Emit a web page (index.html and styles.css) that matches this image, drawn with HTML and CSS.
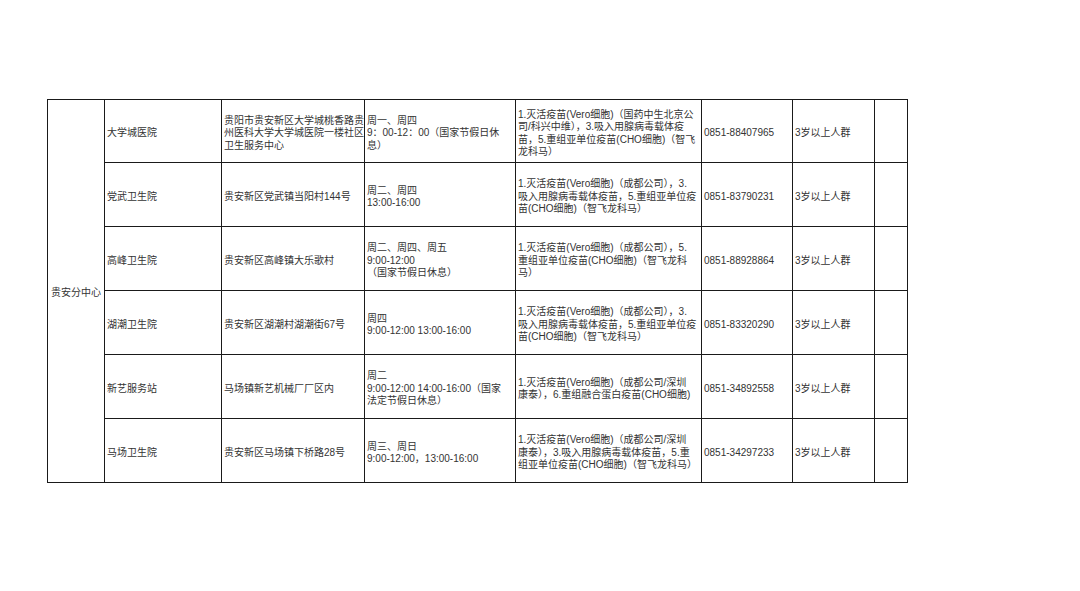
FILE: index.html
```html
<!DOCTYPE html>
<html lang="zh-CN">
<head>
<meta charset="utf-8">
<title>贵安分中心</title>
<link rel="stylesheet" href="styles.css">
</head>
<body>
<div class="page">
<table class="sched">
<colgroup>
<col class="c1"><col class="c2"><col class="c3"><col class="c4"><col class="c5"><col class="c6"><col class="c7"><col class="c8">
</colgroup>
<tbody>
<tr class="r first">
<td class="center" rowspan="6">贵安分中心</td>
<td>大学城医院</td>
<td>贵阳市贵安新区大学城桃香路贵<br>州医科大学大学城医院一楼社区<br>卫生服务中心</td>
<td>周一、周四<br>9：00-12：00（国家节假日休<br>息）</td>
<td>1.灭活疫苗(Vero细胞)（国药中生北京公<br>司/科兴中维），3.吸入用腺病毒载体疫<br>苗，5.重组亚单位疫苗(CHO细胞)（智飞<br>龙科马）</td>
<td>0851-88407965</td>
<td>3岁以上人群</td>
<td></td>
</tr>
<tr class="r">
<td>党武卫生院</td>
<td>贵安新区党武镇当阳村144号</td>
<td>周二、周四<br>13:00-16:00</td>
<td>1.灭活疫苗(Vero细胞)（成都公司），3.<br>吸入用腺病毒载体疫苗，5.重组亚单位疫<br>苗(CHO细胞)（智飞龙科马）</td>
<td>0851-83790231</td>
<td>3岁以上人群</td>
<td></td>
</tr>
<tr class="r">
<td>高峰卫生院</td>
<td>贵安新区高峰镇大乐歌村</td>
<td>周二、周四、周五<br>9:00-12:00<br>（国家节假日休息）</td>
<td>1.灭活疫苗(Vero细胞)（成都公司），5.<br>重组亚单位疫苗(CHO细胞)（智飞龙科<br>马）</td>
<td>0851-88928864</td>
<td>3岁以上人群</td>
<td></td>
</tr>
<tr class="r">
<td>湖潮卫生院</td>
<td>贵安新区湖潮村湖潮街67号</td>
<td>周四<br>9:00-12:00 13:00-16:00</td>
<td>1.灭活疫苗(Vero细胞)（成都公司），3.<br>吸入用腺病毒载体疫苗，5.重组亚单位疫<br>苗(CHO细胞)（智飞龙科马）</td>
<td>0851-83320290</td>
<td>3岁以上人群</td>
<td></td>
</tr>
<tr class="r">
<td>新艺服务站</td>
<td>马场镇新艺机械厂厂区内</td>
<td>周二<br>9:00-12:00 14:00-16:00（国家<br>法定节假日休息）</td>
<td>1.灭活疫苗(Vero细胞)（成都公司/深圳<br>康泰），6.重组融合蛋白疫苗(CHO细胞)</td>
<td>0851-34892558</td>
<td>3岁以上人群</td>
<td></td>
</tr>
<tr class="r">
<td>马场卫生院</td>
<td>贵安新区马场镇下桥路28号</td>
<td>周三、周日<br>9:00-12:00，13:00-16:00</td>
<td>1.灭活疫苗(Vero细胞)（成都公司/深圳<br>康泰），3.吸入用腺病毒载体疫苗，5.重<br>组亚单位疫苗(CHO细胞)（智飞龙科马）</td>
<td>0851-34297233</td>
<td>3岁以上人群</td>
<td></td>
</tr>
</tbody>
</table>
</div>
</body>
</html>
```
FILE: styles.css
```css
html, body {
  margin: 0;
  padding: 0;
  background: #ffffff;
}

.page {
  padding: 99px 0 0 47px;
}

.sched {
  border-collapse: collapse;
  table-layout: fixed;
  width: 860px;
  font-family: "Liberation Sans", "Noto Sans CJK SC", sans-serif;
  font-size: 10px;
  line-height: 12.5px;
  color: #333333;
  border: 1.5px solid #1a1a1a;
}

.c1 { width: 57px; }
.c2 { width: 117px; }
.c3 { width: 143px; }
.c4 { width: 151px; }
.c5 { width: 186px; }
.c6 { width: 91px; }
.c7 { width: 82px; }
.c8 { width: 33px; }

.sched td {
  border: 1px solid #1a1a1a;
  border-top-width: 1.5px;
  border-bottom-width: 1.5px;
  padding: 5px 1px 0 2px;
  vertical-align: middle;
  white-space: nowrap;
  overflow: hidden;
}

.sched td.center {
  padding-left: 3px;
}

.r {
  height: 64px;
}

.r.first {
  height: 63px;
}
```
